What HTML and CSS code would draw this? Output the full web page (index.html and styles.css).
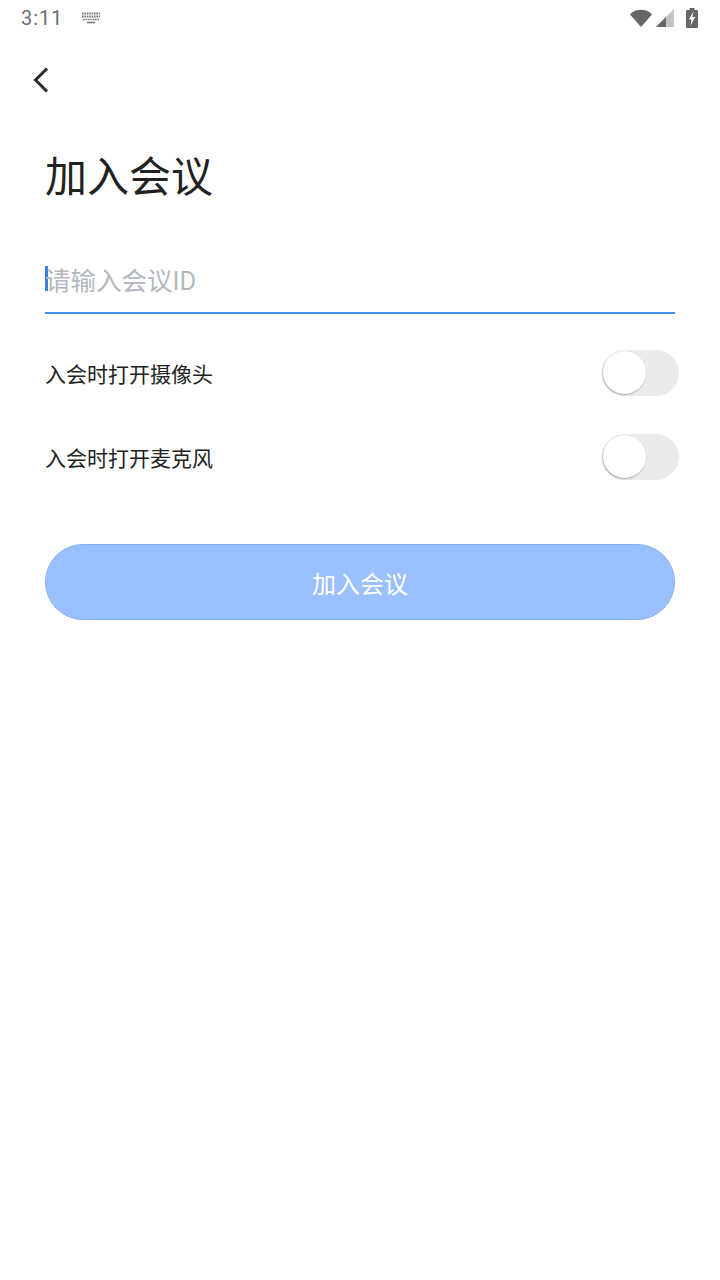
FILE: index.html
```html
<!DOCTYPE html>
<html lang="zh-CN">

<head>
    <meta charset="UTF-8">
    <meta name="viewport" content="width=device-width, initial-scale=1.0">
    <title>加入会议</title>
    <link rel="stylesheet" href="styles.css">
</head>

<body>
    <div class="statusBar">
        <div class="statusLeft">
            <span class="time">3:11</span>
            <svg class="keyboardIcon" width="20" height="12" viewBox="0 0 20 12">
                <path d="M1 1.500h18M1 4.500h18" stroke="#777" stroke-width="2" stroke-dasharray="1.600 .8" fill="none" />
                <path d="M2 7.500h16" stroke="#777" stroke-width="1.600" stroke-dasharray="1.600 .8" fill="none" />
                <path d="M6 10.500h8" stroke="#777" stroke-width="1.600" fill="none" />
            </svg>
        </div>
        <div class="statusRight">
            <svg class="wifiIcon" width="22" height="18" viewBox="0 0 22 18">
                <path d="M0 5.500C3 2.200 6.800 .8 11 .8s8 1.400 11 4.700L11 18z" fill="#666" />
            </svg>
            <svg class="signalIcon" width="18" height="18" viewBox="0 0 18 18">
                <path d="M0 18L18 0v18z" fill="#c4c4c4" />
                <path d="M0 18L10 8v10z" fill="#666" />
            </svg>
            <svg class="batteryIcon" width="12" height="20" viewBox="0 0 12 20">
                <path d="M3.500 0h5v2H11a1 1 0 0 1 1 1v16a1 1 0 0 1-1 1H1a1 1 0 0 1-1-1V3a1 1 0 0 1 1-1h2.500z" fill="#666" />
                <path d="M7.500 3.500L2.800 11.500H5.500L4.500 17.500L9.300 9H6.300z" fill="#fff" />
            </svg>
        </div>
    </div>

    <div class="topBar">
        <svg class="backIcon" width="18" height="26" viewBox="0 0 18 26">
            <path d="M15 1.500L3.500 13L15 24.500" stroke="#2b2b2b" stroke-width="3" fill="none" />
        </svg>
    </div>

    <div class="content">
        <h1 class="title">加入会议</h1>

        <div class="inputRow">
            <span class="caret"></span>
            <span class="placeholder">请输入会议ID</span>
        </div>

        <div class="optionRow cameraRow">
            <span>入会时打开摄像头</span>
            <div class="switch"><div class="knob"></div></div>
        </div>
        <div class="optionRow micRow">
            <span>入会时打开麦克风</span>
            <div class="switch"><div class="knob"></div></div>
        </div>

        <button class="joinBtn">加入会议</button>
    </div>
</body>

</html>
```
FILE: styles.css
```css
body {
    margin: 0;
    width: 720px;
    height: 1280px;
    overflow: hidden;
    background: #fff;
    font-family: "Roboto", "Noto Sans CJK SC", sans-serif;
}

.statusBar {
    height: 36px;
    display: flex;
    justify-content: space-between;
    align-items: center;
    padding: 0 22px 0 21px;
}

.statusLeft {
    display: flex;
    align-items: center;
}

.time {
    font-size: 20px;
    color: #6e6e6e;
    letter-spacing: 0.9px;
}

.keyboardIcon {
    margin-left: 18px;
}

.statusRight {
    display: flex;
    align-items: center;
}

.signalIcon {
    margin-left: 4px;
}

.batteryIcon {
    margin-left: 12px;
}

.topBar {
    height: 88px;
    padding-left: 32px;
    display: flex;
    align-items: center;
}

.content {
    padding: 0 45px;
}

.title {
    margin: 26px 0 0;
    font-size: 42px;
    line-height: 56px;
    font-weight: 400;
    color: #222;
}

.inputRow {
    margin-top: 48px;
    height: 60px;
    box-sizing: border-box;
    width: 630px;
    border-bottom: 2px solid #4a8cf0;
    display: flex;
    align-items: center;
    padding-bottom: 10px;
}

.caret {
    width: 3px;
    height: 25px;
    background: #3d7de4;
    flex-shrink: 0;
}

.placeholder {
    font-size: 25.5px;
    margin-left: -3px;
    color: #b4b8c0;
}

.optionRow {
    display: flex;
    justify-content: space-between;
    align-items: center;
    height: 46px;
    margin-right: -4px;
    font-size: 21px;
    color: #222;
}

.cameraRow {
    margin-top: 36px;
}

.micRow {
    margin-top: 38px;
}

.switch {
    width: 77px;
    height: 46px;
    border-radius: 23px;
    background: #ebebec;
    position: relative;
}

.knob {
    position: absolute;
    left: 1px;
    top: 1px;
    width: 43px;
    height: 43px;
    border-radius: 50%;
    background: #fff;
    box-shadow: -0.5px 1px 2px rgba(0, 0, 0, 0.3);
}

.joinBtn {
    display: block;
    margin-top: 64px;
    width: 630px;
    height: 76px;
    box-sizing: border-box;
    border: 1px solid #83aef0;
    border-radius: 38px;
    background: #9bc0ff;
    color: #fff;
    font-family: inherit;
    font-size: 24px;
    padding: 0;
}
```
